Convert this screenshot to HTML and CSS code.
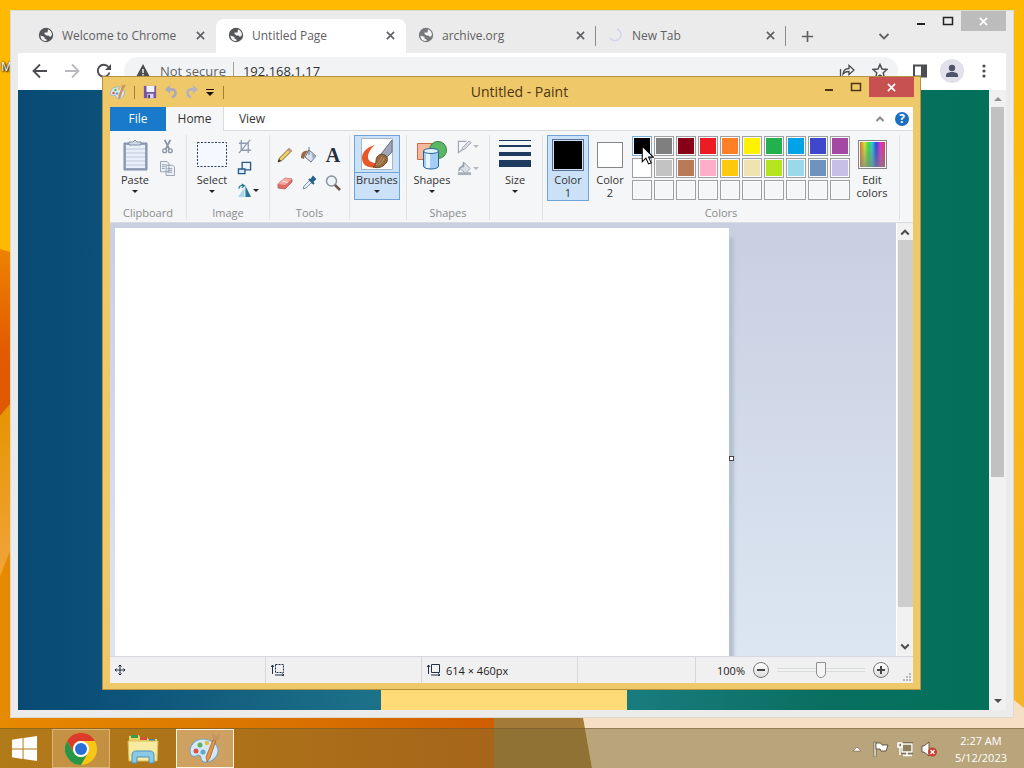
FILE: index.html
```
<!DOCTYPE html>
<html lang="en">
<head>
    <meta charset="UTF-8">
    <meta name="viewport" content="width=device-width, initial-scale=1.0">
    <title>Desktop</title>
    <link rel="stylesheet" href="styles.css">
</head>
<body>
    <!-- shared icons -->
    <svg class="defs" aria-hidden="true">
        <symbol id="globe" viewBox="0 0 16 16">
            <circle cx="8" cy="8" r="7.200" fill="currentColor"/>
            <path d="M2.500 8.500l4 1.500v1.500l2 1v1.500C5 14.300 2.500 12 2.500 8.500zM10 2.300c2.500 1 4 3.200 4 5.700l-2 2-1.500-1.500H8.500L6.500 7V5.500h3z" fill="#f4f4f4"/>
        </symbol>
        <symbol id="cross" viewBox="0 0 10 10">
            <path d="M1 1l8 8M9 1L1 9" fill="none" stroke="currentColor" stroke-width="1.800"/>
        </symbol>
        <symbol id="minimize" viewBox="0 0 12 12">
            <path d="M2 9h8" stroke="currentColor" stroke-width="2"/>
        </symbol>
        <symbol id="maximize" viewBox="0 0 12 12">
            <path d="M1.500 2.500h9v7h-9zM1 2.500h10" fill="none" stroke="currentColor" stroke-width="1.500"/>
        </symbol>
        <symbol id="palette" viewBox="0 0 32 32">
            <path d="M14 6C6 6 1 12 1 18c0 5 3 6 6 5 3-2 5 0 5 2 0 3 3 5 7 4 6-1 11-7 10-13S21 6 14 6z" fill="#d6e8f5" stroke="#7ba3bf" stroke-width="1.200"/>
            <circle cx="7" cy="18" r="2.500" fill="#d65547"/>
            <circle cx="11" cy="12" r="2.500" fill="#5fb05a"/>
            <circle cx="18" cy="10" r="2.300" fill="#e3c044"/>
            <circle cx="14" cy="19" r="2.600" fill="#5fa9cf"/>
            <path d="M27 7l-6 18-3 4-1-5 7-17z" fill="#e79648" stroke="#a66229" stroke-width=".8"/>
            <path d="M24 6l-1-5 4 2 4-3-1 6-3 2z" fill="#c59562"/>
        </symbol>
    </svg>

    <div class="desktop">
        <svg class="wallpaper" viewBox="0 0 1024 768" preserveAspectRatio="none" aria-hidden="true">
            <defs>
                <linearGradient id="flame" x1="0" y1="0" x2="0" y2="1">
                    <stop offset="0" stop-color="#ee8200"/>
                    <stop offset=".6" stop-color="#e35b00"/>
                    <stop offset="1" stop-color="#e05800"/>
                </linearGradient>
                <linearGradient id="gold" x1="0" y1="0" x2="0" y2="1">
                    <stop offset="0" stop-color="#e69400"/>
                    <stop offset="1" stop-color="#f0a43a"/>
                </linearGradient>
                <linearGradient id="floor" x1="0" y1="0" x2="1" y2="0">
                    <stop offset="0" stop-color="#e68a00"/>
                    <stop offset=".45" stop-color="#dc7800"/>
                    <stop offset="1" stop-color="#cf5e00"/>
                </linearGradient>
                <linearGradient id="side" x1="0" y1="0" x2="0" y2="1">
                    <stop offset="0" stop-color="#ffba00"/>
                    <stop offset="1" stop-color="#f6b42e"/>
                </linearGradient>
            </defs>
            <path d="M0 0h1024v768H0z" fill="#ffb900"/>
            <path d="M0 249l10 3v158L0 416z" fill="url(#flame)"/>
            <path d="M0 416l10-12v150L0 576z" fill="url(#gold)"/>
            <path d="M0 576l10-25v150h486v67H0z" fill="url(#floor)"/>
            <path d="M494 700h86l12 68H494z" fill="#a37b37"/>
            <path d="M1000 0h24v720h-24z" fill="url(#side)"/>
            <path d="M580 700h434l10 8v60H592z" fill="#f5dfc5"/>
        </svg>

        <main class="workspace">
            <a class="shortcut" href="#">M</a>

            <!-- browser window -->
            <section class="chrome-window" aria-label="Chrome">
                <header class="tab-strip">
                    <div class="tab">
                        <svg class="tab-icon"><use href="#globe"/></svg>
                        <span class="tab-title">Welcome to Chrome</span>
                        <button class="tab-close" aria-label="Close tab"><svg><use href="#cross"/></svg></button>
                    </div>
                    <div class="tab active">
                        <svg class="tab-icon"><use href="#globe"/></svg>
                        <span class="tab-title">Untitled Page</span>
                        <button class="tab-close" aria-label="Close tab"><svg><use href="#cross"/></svg></button>
                    </div>
                    <div class="tab divided">
                        <svg class="tab-icon light"><use href="#globe"/></svg>
                        <span class="tab-title">archive.org</span>
                        <button class="tab-close" aria-label="Close tab"><svg><use href="#cross"/></svg></button>
                    </div>
                    <div class="tab divided">
                        <svg class="tab-icon" viewBox="0 0 16 16"><path d="M9 2a6 6 0 1 1-7 9" fill="none" stroke="#d0d5ef" stroke-width="1.500"/></svg>
                        <span class="tab-title">New Tab</span>
                        <button class="tab-close" aria-label="Close tab"><svg><use href="#cross"/></svg></button>
                    </div>
                    <button class="new-tab" aria-label="New tab"><svg viewBox="0 0 14 14"><path d="M7 1v12M1 7h12" stroke="currentColor" stroke-width="1.800"/></svg></button>
                    <span class="spacer"></span>
                    <button class="tab-search" aria-label="Search tabs"><svg viewBox="0 0 12 12"><path d="M1.500 4L6 8.500 10.500 4" fill="none" stroke="currentColor" stroke-width="1.800"/></svg></button>
                    <div class="window-controls">
                        <button class="control" aria-label="Minimize"><svg><use href="#minimize"/></svg></button>
                        <button class="control" aria-label="Maximize"><svg><use href="#maximize"/></svg></button>
                        <button class="control close" aria-label="Close"><svg class="x"><use href="#cross"/></svg></button>
                    </div>
                </header>

                <nav class="toolbar">
                    <button class="tool" aria-label="Back"><svg viewBox="0 0 16 16"><path d="M15 8H2M8 1.500L1.500 8 8 14.500" fill="none" stroke="#4c4d50" stroke-width="1.800"/></svg></button>
                    <button class="tool" aria-label="Forward"><svg viewBox="0 0 16 16"><path d="M1 8h13M8 1.500L14.500 8 8 14.500" fill="none" stroke="#b9babd" stroke-width="1.800"/></svg></button>
                    <button class="tool" aria-label="Reload"><svg viewBox="0 0 16 16"><path d="M13.500 9.500A6 6 0 1 1 12.500 4" fill="none" stroke="#4c4d50" stroke-width="1.900"/><path d="M15 1v6H9z" fill="#4c4d50"/></svg></button>
                    <div class="omnibox">
                        <svg class="warning" viewBox="0 0 16 16"><path d="M8 1L15 14H1z" fill="#4c4d50"/><path d="M8 6v4M8 11v1.500" stroke="#f1f3f4" stroke-width="1.500"/></svg>
                        <label for="address">Not secure</label>
                        <input id="address" type="text" value="192.168.1.17">
                        <button class="tool" aria-label="Share"><svg viewBox="0 0 16 16"><path d="M1.500 6v8.500H12M4 11c.5-4 3-5.500 6-5.500V2.500L15 7l-5 4.500V8.500C7 8.500 5.500 9 4 11z" fill="none" stroke="#4c4d50" stroke-width="1.300"/></svg></button>
                        <button class="tool" aria-label="Bookmark"><svg viewBox="0 0 16 16"><path d="M8 1.500l2 4.500 5 .500-3.700 3.300 1 5L8 12.200 3.700 14.800l1-5L1 6.500 6 6z" fill="none" stroke="#4c4d50" stroke-width="1.500"/></svg></button>
                    </div>
                    <button class="tool" aria-label="Side panel"><svg viewBox="0 0 16 16"><path d="M2 2.500h12v11H2z" fill="none" stroke="#4c4d50" stroke-width="2"/><path d="M9 2h5v12H9z" fill="#4c4d50"/></svg></button>
                    <button class="tool avatar" aria-label="Profile"><svg viewBox="0 0 16 16"><circle cx="8" cy="5" r="3.200" fill="#4f5468"/><path d="M2 14v-2c0-4 12-4 12 0v2z" fill="#4f5468"/></svg></button>
                    <button class="tool" aria-label="Menu"><svg viewBox="0 0 16 16" fill="#4c4d50"><circle cx="8" cy="3" r="1.600"/><circle cx="8" cy="8" r="1.600"/><circle cx="8" cy="13" r="1.600"/></svg></button>
                </nav>

                <div class="viewport">
                    <div class="page"><div class="panel"></div></div>
                    <div class="page-scroll">
                        <svg viewBox="0 0 8 4"><path d="M4 0l4 4H0z" fill="#929292"/></svg>
                        <div class="page-thumb"></div>
                        <svg viewBox="0 0 8 4"><path d="M0 0h8L4 4z" fill="#4d4d4d"/></svg>
                    </div>
                </div>
            </section>

            <!-- paint window -->
            <section class="paint-window" aria-label="Paint">
                <header class="title-bar">
                    <div class="quick-access">
                        <svg class="icon"><use href="#palette"/></svg>
                        <i class="bar"></i>
                        <button class="quick" aria-label="Save"><svg viewBox="0 0 16 16"><path d="M1 1h14v14H1z" fill="#7557a5"/><path d="M4 1h9v7H4z" fill="#f5f3fa"/><path d="M5 10h7v5H5z" fill="#ddd4eb"/><path d="M6 11h2v4H6z" fill="#4c3474"/></svg></button>
                        <button class="quick" aria-label="Undo"><svg viewBox="0 0 16 16"><path d="M5 5h4c6 0 5 8 0 9" fill="none" stroke="#aaa9bd" stroke-width="3"/><path d="M7 0v10L1 5z" fill="#aaa9bd"/></svg></button>
                        <button class="quick" aria-label="Redo"><svg viewBox="0 0 16 16"><path d="M11 5H7c-6 0-5 8 0 9" fill="none" stroke="#b5b2bd" stroke-width="3"/><path d="M9 0v10l6-5z" fill="#b5b2bd"/></svg></button>
                        <button class="quick narrow" aria-label="Customize toolbar"><svg viewBox="0 0 8 8"><path d="M0 1h8v1H0zM0 4h8L4 8z" fill="#1d1400"/></svg></button>
                        <i class="bar"></i>
                    </div>
                    <h1>Untitled - Paint</h1>
                    <div class="window-controls">
                        <button class="control" aria-label="Minimize"><svg><use href="#minimize"/></svg></button>
                        <button class="control" aria-label="Maximize"><svg><use href="#maximize"/></svg></button>
                        <button class="control close" aria-label="Close"><svg class="x"><use href="#cross"/></svg></button>
                    </div>
                </header>

                <nav class="ribbon-tabs">
                    <button class="ribbon-tab file">File</button>
                    <button class="ribbon-tab home">Home</button>
                    <button class="ribbon-tab">View</button>
                    <span class="spacer"></span>
                    <button class="collapse" aria-label="Collapse ribbon"><svg viewBox="0 0 10 10"><path d="M1.500 7L5 3.500 8.500 7" fill="none" stroke="#8b8b8b" stroke-width="2"/></svg></button>
                    <button class="help" aria-label="Help">?</button>
                </nav>

                <div class="ribbon">
                    <div class="group">
                        <div class="group-body">
                            <button class="big">
                                <span class="picture"><svg class="p32" viewBox="0 0 32 32"><path d="M5 4h23v27H5z" fill="#94a3ba" stroke="#7f8da6"/><path d="M7 6h19v23H7z" fill="#e9eff8"/><path d="M7 10h19M7 14h19M7 18h19M7 22h19M7 26h19" stroke="#bccadd"/><path d="M10 6V3h4l2-2 2 2h4v3z" fill="#d5dbe5" stroke="#7f8da6"/></svg></span>
                                <span>Paste</span><i class="arrow"></i>
                            </button>
                            <div class="stack">
                                <button class="small" aria-label="Cut"><svg viewBox="0 0 16 16"><path d="M5 1l5 10M11 1L6 11" stroke="#8c96a8" stroke-width="2"/><circle cx="5" cy="12.500" r="2" fill="none" stroke="#8c96a8" stroke-width="1.500"/><circle cx="11" cy="12.500" r="2" fill="none" stroke="#8c96a8" stroke-width="1.500"/></svg></button>
                                <button class="small" aria-label="Copy"><svg viewBox="0 0 16 16"><g fill="#edf0f5" stroke="#929fb4"><path d="M.5.5h7l2 2v9h-9zM6.500 4.500h7l2 2v9h-9z"/><path d="M2 4h4M2 6h3M2 8h3M8 8h5M8 10h5M8 12h5"/></g></svg></button>
                            </div>
                        </div>
                        <span class="group-name">Clipboard</span>
                    </div>

                    <div class="group">
                        <div class="group-body">
                            <button class="big">
                                <span class="picture"><svg class="p32" viewBox="0 0 32 32"><path d="M1.500 3.500h29v24h-29z" fill="#f5f9ff" stroke="#233a63" stroke-dasharray="2 1.500"/></svg></span>
                                <span>Select</span><i class="arrow"></i>
                            </button>
                            <div class="stack">
                                <button class="small" aria-label="Crop"><svg viewBox="0 0 16 16"><path d="M4.500 1v11H15M2 4.500h10V15M2 15L14 1" fill="none" stroke="#909cb0" stroke-width="1.400"/></svg></button>
                                <button class="small" aria-label="Resize"><svg viewBox="0 0 16 16"><path d="M5.500 1.500h9v8h-9z" fill="#edf5fc" stroke="#285788" stroke-width="1.400"/><path d="M1.500 8.500h7v5h-7z" fill="#d8e9f9" stroke="#285788" stroke-width="1.400"/></svg></button>
                                <button class="small" aria-label="Rotate"><svg viewBox="0 0 16 16"><path d="M8 5v10H1z" fill="#acd4ea"/><path d="M9 3l6 12H9z" fill="#287695"/><path d="M2 6c0-3 3-4 5-3M5 1l3 2-3 2" fill="none" stroke="#287695" stroke-width="1.300"/></svg><i class="arrow"></i></button>
                            </div>
                        </div>
                        <span class="group-name">Image</span>
                    </div>

                    <div class="group">
                        <div class="group-body tools">
                            <button aria-label="Pencil"><svg viewBox="0 0 16 16"><path d="M1 15l1.500-4L12 1.500l2.500 2.500L5 13.500z" fill="#f0cf62" stroke="#6e5c3a" stroke-width=".9"/><path d="M11.500 2l2.500 2.500" stroke="#c98f86" stroke-width="2.500"/><path d="M1 15l1-3 2 2z" fill="#333"/></svg></button>
                            <button aria-label="Fill"><svg viewBox="0 0 16 16"><path d="M8 3l7 6-5 6-6-5z" fill="#d9e2ec" stroke="#66788b"/><path d="M10 4l5 5-3 4z" fill="#9dafbf"/><path d="M8 0v8" stroke="#66788b"/><path d="M0 11C0 5 3 3 8 4 5 5 4 8 3 12z" fill="#9b674a"/></svg></button>
                            <button class="text-tool" aria-label="Text">A</button>
                            <button aria-label="Eraser"><svg viewBox="0 0 16 16"><path d="M1 9l7-6 7 1v3l-7 7-7-1z" fill="#e36c68" stroke="#b85455" stroke-width=".8"/><path d="M8 3l7 1-7 6-7-1z" fill="#f6a79e"/><path d="M5 6l6 1.500" stroke="#fff0e9"/></svg></button>
                            <button aria-label="Color picker"><svg viewBox="0 0 16 16"><path d="M2 14l1-3 6-6 2 2-6 6z" fill="#e9f2fa" stroke="#7892ac"/><path d="M8 4l5 5M10 5l2-3 2 2-3 3z" fill="#28618f" stroke="#28618f" stroke-width="2"/></svg></button>
                            <button aria-label="Magnifier"><svg viewBox="0 0 16 16"><circle cx="6.500" cy="6" r="5" fill="#edf5fa" stroke="#8992a0" stroke-width="1.500"/><path d="M10 10l5 5" stroke="#6d5850" stroke-width="2.500"/></svg></button>
                        </div>
                        <span class="group-name">Tools</span>
                    </div>

                    <div class="group">
                        <div class="group-body">
                            <button class="big brushes selected">
                                <span class="picture"><svg class="p32" viewBox="0 0 32 32"><path d="M.500.500h31v31H.5z" fill="#fff" stroke="#a8b7c5"/><path d="M14 7C6 9 1 14 1 20c0 7 6 11 15 9l3-4c-6 1-12-1-12-6 0-4 3-9 7-12z" fill="#e7572a"/><path d="M20 16L31 2v12l-7 7z" fill="#a0a6b5" stroke="#6c7282"/><path d="M12 29c4-2 2-6 4-10 2-3 6-4 9-1s1 7-2 9c-3 3-7 3-11 2z" fill="#986b3e" stroke="#6d472a"/><path d="M15 27c3-2 4-5 6-8M18 27c3-2 4-4 5-7" fill="none" stroke="#c39a68"/></svg></span>
                                <span>Brushes</span><i class="arrow"></i>
                            </button>
                        </div>
                    </div>

                    <div class="group">
                        <div class="group-body">
                            <button class="big">
                                <span class="picture"><svg class="p32" viewBox="0 0 32 32"><path d="M1.500 4.500h17v16h-17z" fill="#f6b89d" stroke="#cd6949"/><circle cx="22" cy="11" r="8.500" fill="#5cb765" stroke="#2b833b"/><path d="M7.500 12v15c0 4 15 4 15 0V12z" fill="#a4cff5" stroke="#28659a"/><path d="M12 14v15" stroke="#e8f5ff" stroke-width="4"/><ellipse cx="15" cy="12" rx="7.500" ry="2.500" fill="#e2f2fd" stroke="#28659a"/></svg></span>
                                <span>Shapes</span><i class="arrow"></i>
                            </button>
                            <div class="stack disabled">
                                <button class="small" aria-label="Shape outline"><svg viewBox="0 0 16 16"><path d="M10 2.500H1.500v12L5 12" fill="none" stroke="#9aa3b0" stroke-width="1.200"/><path d="M5 12l1-3 7-7 2 2-7 7z" fill="#d8dce2" stroke="#9aa3b0"/></svg><i class="arrow"></i></button>
                                <button class="small" aria-label="Shape fill"><svg viewBox="0 0 16 16"><path d="M8 2l6 6-5 5-6-5z" fill="#dbe0e6" stroke="#929dac"/><path d="M1 12h14v3H1z" fill="#a7afbb"/><path d="M2 11c0-4 2-5 5-5M7 1v5" fill="none" stroke="#929dac" stroke-width="1.500"/></svg><i class="arrow"></i></button>
                            </div>
                        </div>
                        <span class="group-name">Shapes</span>
                    </div>

                    <div class="group">
                        <div class="group-body">
                            <button class="big">
                                <span class="picture"><svg class="p32" viewBox="0 0 32 32"><path d="M0 1h32v1H0zM0 6h32v2H0zM0 13h32v4H0zM0 21h32v7H0z" fill="#1e3a5f"/></svg></span>
                                <span>Size</span><i class="arrow"></i>
                            </button>
                        </div>
                    </div>

                    <div class="group">
                        <div class="group-body colors">
                            <button class="big selected">
                                <span class="picture"><i class="sample foreground"></i></span>
                                <span>Color<br>1</span>
                            </button>
                            <button class="big">
                                <span class="picture"><i class="sample background"></i></span>
                                <span>Color<br>2</span>
                            </button>
                            <div class="swatches">
                                <button class="swatch black" aria-label="Black"></button>
                                <button class="swatch gray" aria-label="Gray"></button>
                                <button class="swatch dark-red" aria-label="Dark red"></button>
                                <button class="swatch red" aria-label="Red"></button>
                                <button class="swatch orange" aria-label="Orange"></button>
                                <button class="swatch yellow" aria-label="Yellow"></button>
                                <button class="swatch green" aria-label="Green"></button>
                                <button class="swatch turquoise" aria-label="Turquoise"></button>
                                <button class="swatch indigo" aria-label="Indigo"></button>
                                <button class="swatch purple" aria-label="Purple"></button>
                                <button class="swatch white" aria-label="White"></button>
                                <button class="swatch light-gray" aria-label="Light gray"></button>
                                <button class="swatch brown" aria-label="Brown"></button>
                                <button class="swatch rose" aria-label="Rose"></button>
                                <button class="swatch gold" aria-label="Gold"></button>
                                <button class="swatch light-yellow" aria-label="Light yellow"></button>
                                <button class="swatch lime" aria-label="Lime"></button>
                                <button class="swatch light-turquoise" aria-label="Light turquoise"></button>
                                <button class="swatch blue-gray" aria-label="Blue gray"></button>
                                <button class="swatch lavender" aria-label="Lavender"></button>
                                <button class="swatch" aria-label="Custom 1"></button>
                                <button class="swatch" aria-label="Custom 2"></button>
                                <button class="swatch" aria-label="Custom 3"></button>
                                <button class="swatch" aria-label="Custom 4"></button>
                                <button class="swatch" aria-label="Custom 5"></button>
                                <button class="swatch" aria-label="Custom 6"></button>
                                <button class="swatch" aria-label="Custom 7"></button>
                                <button class="swatch" aria-label="Custom 8"></button>
                                <button class="swatch" aria-label="Custom 9"></button>
                                <button class="swatch" aria-label="Custom 10"></button>
                            </div>
                            <button class="big">
                                <span class="picture"><i class="sample spectrum"></i></span>
                                <span>Edit<br>colors</span>
                            </button>
                        </div>
                        <span class="group-name">Colors</span>
                    </div>
                </div>

                <div class="work-area">
                    <div class="canvas-area">
                        <div class="canvas"><i class="handle"></i></div>
                    </div>
                    <div class="paint-scroll">
                        <svg viewBox="0 0 8 8"><path d="M1 6l3-3 3 3" fill="none" stroke="#4d4d4d" stroke-width="1.600"/></svg>
                        <div class="paint-thumb"></div>
                        <svg viewBox="0 0 8 8"><path d="M1 2l3 3 3-3" fill="none" stroke="#4d4d4d" stroke-width="1.600"/></svg>
                    </div>
                </div>

                <footer class="status-bar">
                    <div class="status"><svg viewBox="0 0 12 12"><path d="M6 1v10M1 6h10M4.500 2.500L6 1l1.500 1.500M4.500 9.500L6 11l1.500-1.500M2.500 4.500L1 6l1.500 1.500M9.500 4.500L11 6 9.500 7.500" fill="none" stroke="#1c2b3c"/></svg></div>
                    <div class="status"><svg class="wide" viewBox="0 0 14 12"><path d="M1.500 10V1M0 3l1.500-2L3 3M4 11h9M11 9.500l2 1.500-2 1" fill="none" stroke="#1e3349"/><path d="M4.500.5h8v8h-8z" fill="none" stroke="#1e3349" stroke-dasharray="2 1"/></svg></div>
                    <div class="status"><svg class="wide" viewBox="0 0 14 12"><path d="M1.500 10V1M0 3l1.500-2L3 3M4 11h9M11 9.500l2 1.500-2 1M4.500.5h8v8h-8z" fill="none" stroke="#1e3349"/></svg><span>614 × 460px</span></div>
                    <div class="status blank"></div>
                    <div class="zoom">
                        <label for="zoom">100%</label>
                        <button class="round" aria-label="Zoom out"><svg viewBox="0 0 10 10"><path d="M1 5h8" stroke="#444" stroke-width="2"/></svg></button>
                        <input id="zoom" type="range" min="0" max="100" value="50">
                        <button class="round" aria-label="Zoom in"><svg viewBox="0 0 10 10"><path d="M1 5h8M5 1v8" stroke="#444" stroke-width="2"/></svg></button>
                        <svg class="grip" viewBox="0 0 8 8"><path d="M6 0h2v2H6zM3 3h2v2H3zM6 3h2v2H6zM0 6h2v2H0zM3 6h2v2H3zM6 6h2v2H6z" fill="#b7b7b7"/></svg>
                    </div>
                </footer>
            </section>

            <svg class="pointer" viewBox="0 0 12 19" aria-hidden="true"><path d="M1 1v15l3.500-3.500L7 18l2.500-1-2.500-5.500h4.500z" fill="#fff" stroke="#000"/></svg>
        </main>

        <footer class="taskbar">
            <button class="start" aria-label="Start"><svg viewBox="0 0 28 28"><path d="M1 5l11-2v11H1zM13 3l14-2v13H13zM1 15h11v10L1 23zM13 15h14v12l-14-2z" fill="#fff"/></svg></button>
            <button class="task open" aria-label="Chrome">
                <svg viewBox="0 0 32 32"><circle cx="16" cy="16" r="16" fill="#f9c713"/><path d="M2.100 8A16 16 0 0 1 29.900 8H16a8 8 0 0 0-7 12z" fill="#dc3b2b"/><path d="M2.100 8A16 16 0 0 0 16 32l7-12a8 8 0 0 1-14 0z" fill="#279648"/><circle cx="16" cy="16" r="8" fill="#fff"/><circle cx="16" cy="16" r="6" fill="#2870d8"/></svg>
            </button>
            <button class="task" aria-label="File Explorer">
                <svg viewBox="0 0 32 32"><path d="M2 3l10-1 1 2h7l1 2h9v22H2z" fill="#e9d56a"/><path d="M4 2h7v3H4z" fill="#3d9b4a"/><path d="M13 4h7v3h-7z" fill="#ce5138"/><path d="M22 6h6v3h-6z" fill="#3f82a6"/><path d="M1 8h30l-1 20H2z" fill="#f6eba0" stroke="#d7be56"/><path d="M5 30V22c0-3 2-4 4-4h14c2 0 4 1 4 4v8h-5v-6H10v6z" fill="#8ac8e6" stroke="#4d93be"/></svg>
            </button>
            <button class="task open current" aria-label="Paint"><svg><use href="#palette"/></svg></button>
            <span class="spacer"></span>
            <div class="tray">
                <button aria-label="Show hidden icons"><svg viewBox="0 0 16 16"><path d="M4 10l4-4 4 4z" fill="#fff" stroke="#5c4c30" stroke-width=".5"/></svg></button>
                <button aria-label="Action center"><svg viewBox="0 0 16 16"><path d="M1 1h2v15H1z" fill="#fff" stroke="#4a3c24" stroke-width=".6"/><path d="M3 2h5l1 2h6l-2 6H8L7 8H3z" fill="#fff" stroke="#4a3c24" stroke-width=".8"/></svg></button>
                <button aria-label="Network"><svg viewBox="0 0 16 16"><path d="M5 3h10v8H5z" fill="#8f805b" stroke="#4a3c24" stroke-width="3"/><path d="M5 3h10v8H5z" fill="#8f805b" stroke="#fff" stroke-width="1.500"/><path d="M10 11v3M6 14.500h9M3 6v8M1 2h4v4H1z" fill="none" stroke="#fff" stroke-width="1.500"/></svg></button>
                <button aria-label="Volume muted"><svg viewBox="0 0 16 16"><path d="M1 5h2l5-4v14l-5-4H1z" fill="#fff" stroke="#4a3c24" stroke-width=".8"/><circle cx="11.500" cy="11" r="4.500" fill="#c83b2f"/><path d="M9.500 9l4 4M13.500 9l-4 4" stroke="#fff" stroke-width="1.300"/></svg></button>
                <time class="clock" datetime="2023-05-12T02:27">2:27 AM<br>5/12/2023</time>
            </div>
        </footer>
    </div>
</body>
</html>
```
FILE: styles.css
```
* {
    box-sizing: border-box;
}
body {
    margin: 0;
    font-family: "Open Sans", "Noto Sans", sans-serif;
    font-size: 12px;
    color: #333;
}
button {
    display: flex;
    align-items: center;
    justify-content: center;
    margin: 0;
    padding: 0;
    border: none;
    background: none;
    font: inherit;
    color: inherit;
}
svg {
    display: block;
    flex: none;
    width: 16px;
    height: 16px;
}
.defs {
    position: absolute;
    width: 0;
    height: 0;
}
.spacer {
    flex: 1;
}

/* desktop */
.desktop {
    position: relative;
    display: flex;
    flex-direction: column;
    height: 100vh;
    overflow: hidden;
}
.wallpaper {
    position: absolute;
    width: 100%;
    height: 100%;
}
.workspace {
    position: relative;
    flex: 1;
}
.shortcut {
    position: absolute;
    left: 1px;
    top: 58px;
    color: #fff;
    text-decoration: none;
    text-shadow: 1px 1px 2px #000, 0 0 2px #000;
}
.window-controls {
    display: flex;
    align-self: flex-start;
}
.control {
    width: 27px;
    height: 20px;
}
.control svg {
    width: 12px;
    height: 12px;
}
.control.close {
    width: 45px;
    color: #fff;
}
.control .x {
    width: 9px;
    height: 9px;
}

/* browser */
.chrome-window {
    position: absolute;
    inset: 10px 10px 10px 10px;
    display: flex;
    flex-direction: column;
    padding: 0 7px 7px;
    background: #ebebeb;
    border: 1px solid #dfd9cb;
}
.tab-strip {
    display: flex;
    align-items: center;
    height: 42px;
    padding-left: 8px;
    color: #5f6063;
}
.tab {
    display: flex;
    align-items: center;
    align-self: flex-end;
    gap: 8px;
    width: 190px;
    height: 34px;
    padding: 0 11px 2px 12px;
}
.tab.active {
    background: #fff;
    border-radius: 8px 8px 0 0;
}
.tab.divided {
    background: linear-gradient(#8b8b8b, #8b8b8b) right center / 1px 20px no-repeat;
}
.tab-icon {
    color: #55565a;
}
.tab-icon.light {
    color: #77787b;
}
.tab-title {
    flex: 1;
    white-space: nowrap;
}
.tab-close svg {
    width: 9px;
    height: 9px;
}
.new-tab {
    align-self: flex-end;
    width: 42px;
    height: 34px;
}
.new-tab svg {
    width: 13px;
    height: 13px;
}
.tab-search {
    align-self: flex-end;
    width: 42px;
    height: 34px;
    margin-right: 2px;
}
.tab-search svg {
    width: 12px;
    height: 12px;
}
.chrome-window .control {
    color: #222;
}
.chrome-window .close {
    background: #bcbcbc;
    color: #fff;
}
.toolbar {
    display: flex;
    align-items: center;
    gap: 8px;
    height: 37px;
    padding: 0 10px 2px;
    background: #fff;
}
.tool {
    width: 24px;
    height: 24px;
}
.omnibox {
    display: flex;
    flex: 1;
    align-items: center;
    gap: 9px;
    height: 28px;
    padding: 0 6px 0 11px;
    margin-right: 2px;
    border-radius: 14px;
    background: #f1f3f4;
    font-size: 13px;
}
.omnibox label {
    padding-right: 7px;
    border-right: 1px solid #a0a1a3;
    color: #626367;
    line-height: 18px;
}
.omnibox input {
    flex: 1;
    min-width: 0;
    padding: 0;
    border: none;
    background: none;
    font: inherit;
    color: #303134;
}
.avatar {
    border-radius: 12px;
    background: #e0e1ea;
}
.viewport {
    display: flex;
    flex: 1;
}
.page {
    display: flex;
    flex: 1;
    align-items: flex-end;
    justify-content: center;
    background: linear-gradient(90deg, #084a74 0%, #0b5078 8%, #1c7188 36%, #187b7d 64%, #0a7062 82%, #03705a 100%);
}
.panel {
    width: 246px;
    height: 120px;
    background: linear-gradient(#f5ce5e, #ffdc78);
}
.page-scroll {
    display: flex;
    flex-direction: column;
    align-items: center;
    width: 17px;
    padding: 7px 0;
    background: #f1f1f1;
}
.page-scroll svg {
    width: 8px;
    height: 4px;
}
.page-thumb {
    width: 13px;
    height: 61%;
    margin: 6px 0 auto;
    background: #c1c1c1;
}

/* paint */
.paint-window {
    position: absolute;
    inset: 76px 103px 38px 102px;
    display: flex;
    flex-direction: column;
    padding: 0 7px 6px;
    border: 1px solid #b3913f;
    background: #efc869;
}
.title-bar {
    display: flex;
    align-items: center;
    height: 30px;
    margin-right: -1px;
    color: #4e3514;
}
.title-bar h1 {
    flex: 1;
    margin: 0;
    padding-bottom: 2px;
    font-size: 14px;
    font-weight: 400;
    text-align: center;
}
.title-bar .close {
    background: #c75050;
}
.quick-access {
    display: flex;
    align-items: center;
    width: 114px;
}
.quick-access .icon {
    margin-right: 8px;
}
.bar {
    width: 1px;
    height: 13px;
    background: #a27d34;
}
.quick {
    width: 22px;
    height: 22px;
}
.quick svg {
    width: 14px;
    height: 14px;
}
.bar + .quick {
    margin-left: 5px;
}
.quick.narrow {
    width: 16px;
    margin-right: 6px;
}
.quick.narrow svg {
    width: 8px;
    height: 8px;
}
.ribbon-tabs {
    display: flex;
    align-items: center;
    height: 24px;
    border-bottom: 1px solid #dadbdc;
    background: #fff;
}
.ribbon-tab {
    width: 56px;
    height: 24px;
}
.ribbon-tab.file {
    background: #1979ca;
    color: #fff;
}
.ribbon-tab.home {
    width: 58px;
    border-right: 1px solid #dadbdc;
    background: #f5f6f7;
}
.collapse {
    margin-right: 10px;
}
.collapse svg {
    width: 10px;
    height: 10px;
}
.help {
    width: 14px;
    height: 14px;
    margin-right: 4px;
    border-radius: 7px;
    background: #1b6fc0;
    color: #fff;
    font-weight: 700;
}
.ribbon {
    display: grid;
    grid-template-columns: 77px 83px 80px 57px 83px 53px 357px;
    background: #f5f6f7;
    border-bottom: 1px solid #dadbdc;
    padding: 4px 0 2px;
    font-size: 11px;
    line-height: 13px;
}
.group {
    display: flex;
    flex-direction: column;
    border-right: 1px solid #e2e3e4;
}
.group-body {
    display: flex;
    align-items: flex-start;
    gap: 2px;
    height: 70px;
    padding: 0 4px;
}
.group-name {
    line-height: 15px;
    text-align: center;
    color: #8a8b8e;
}
.big {
    flex-direction: column;
    justify-content: flex-start;
    width: 42px;
    height: 66px;
    border: 1px solid transparent;
}
.big.selected {
    border-color: #6da3d8;
    background: #cbe1f8;
}
.big.brushes {
    width: 46px;
    height: 65px;
}
.brushes .picture {
    width: 44px;
    border-bottom: 1px solid #6da3d8;
}
.picture {
    display: flex;
    align-items: center;
    justify-content: center;
    height: 37px;
}
.p32 {
    width: 32px;
    height: 32px;
}
.arrow {
    border: 3px solid transparent;
    border-top-color: #222;
    border-bottom: none;
    margin-top: 4px;
}
.stack {
    display: flex;
    flex-direction: column;
}
.small {
    justify-content: flex-start;
    gap: 1px;
    height: 22px;
    padding: 0 2px;
}
.small svg {
    width: 15px;
    height: 15px;
}
.small .arrow {
    margin-top: 0;
}
.disabled .arrow {
    border-top-color: #b4b8be;
}
.tools {
    display: grid;
    grid-template-columns: repeat(3, 24px);
    grid-auto-rows: 28px;
    justify-content: start;
    gap: 0;
    padding: 6px 3px;
}
.tools button {
    height: 28px;
}
.tools .text-tool {
    font-family: "Liberation Serif", serif;
    font-size: 20px;
    font-weight: 700;
    color: #243042;
}
.colors {
    gap: 0;
}
.sample {
    width: 24px;
    height: 24px;
    border: 1px solid #868686;
}
.sample.foreground {
    width: 32px;
    height: 32px;
    border-color: #55718e;
    padding: 1px;
    background: #000 content-box;
}
.sample.background {
    width: 26px;
    height: 26px;
    background: #fff;
}
.sample.spectrum {
    width: 29px;
    height: 29px;
    padding: 1px;
    background: linear-gradient(rgba(128, 128, 128, 0), rgba(128, 128, 128, .7)) content-box, linear-gradient(90deg, #e5702a, #d4e735 18%, #35dc44 35%, #2acee0 48%, #3040dc 65%, #df30d0 82%, #e13a55) content-box;
}
.swatches {
    display: grid;
    grid-template-columns: repeat(10, 20px);
    gap: 2px;
    padding: 1px 1px 0;
}
.swatch {
    width: 20px;
    height: 20px;
    padding: 1px;
    border: 1px solid #a0a0a0;
    background-clip: content-box;
    box-shadow: inset 0 0 0 1px #fafbfc;
}
.black { background-color: #000; border-color: #7bb0dc; }
.gray { background-color: #7f7f7f; }
.dark-red { background-color: #880015; }
.red { background-color: #ed1c24; }
.orange { background-color: #ff7f27; }
.yellow { background-color: #fff200; }
.green { background-color: #22b14c; }
.turquoise { background-color: #00a2e8; }
.indigo { background-color: #3f48cc; }
.purple { background-color: #a349a4; }
.white { background-color: #fff; }
.light-gray { background-color: #c3c3c3; }
.brown { background-color: #b97a57; }
.rose { background-color: #ffaec9; }
.gold { background-color: #ffc90e; }
.light-yellow { background-color: #efe4b0; }
.lime { background-color: #b5e61d; }
.light-turquoise { background-color: #99d9ea; }
.blue-gray { background-color: #7092be; }
.lavender { background-color: #c8bfe7; }

.work-area {
    display: flex;
    flex: 1;
    min-height: 0;
}
.canvas-area {
    flex: 1;
    padding: 5px;
    overflow: hidden;
    background: linear-gradient(#c8cfe1, #dce6f2);
}
.canvas {
    position: relative;
    width: 614px;
    height: 460px;
    background: #fff;
    box-shadow: 6px 9px 3px -1px #b4c1cf;
}
.handle {
    position: absolute;
    left: 100%;
    top: 50%;
    width: 5px;
    height: 5px;
    margin-top: -2px;
    border: 1px solid #444;
    background: #fff;
}
.paint-scroll {
    display: flex;
    flex-direction: column;
    align-items: center;
    width: 17px;
    padding: 4px 0;
    border-left: 1px solid #fff;
    background: #f1f1f1;
}
.paint-scroll svg {
    width: 10px;
    height: 10px;
}
.paint-thumb {
    width: 15px;
    height: 367px;
    margin: 3px 0 auto;
    background: #cdcdcd;
}
.status-bar {
    display: flex;
    height: 27px;
    border-top: 1px solid #d5d8dc;
    background: #f0f0f0;
    color: #222;
    font-size: 11px;
}
.status {
    display: flex;
    align-items: center;
    gap: 5px;
    width: 156px;
    padding-left: 4px;
    border-right: 1px solid #d7d7d7;
}
.status svg {
    width: 12px;
    height: 12px;
}
.status .wide {
    width: 14px;
    margin-left: 1px;
}
.status.blank {
    flex: 1;
}
.zoom {
    display: flex;
    align-items: center;
    padding-left: 21px;
}
.round {
    width: 16px;
    height: 16px;
    margin: 0 8px;
    border: 1px solid #777;
    border-radius: 8px;
    background: linear-gradient(#fff, #ddd);
}
.round svg {
    width: 10px;
    height: 10px;
}
#zoom {
    appearance: none;
    width: 88px;
    height: 20px;
    margin: 0;
    background: linear-gradient(#d9dcdc, #d9dcdc) center / 100% 4px no-repeat, #f0f0f0;
    background: linear-gradient(#d9dcdc 1px, #f2f2f2 1px, #f2f2f2 3px, #d9dcdc 3px) center / 100% 4px no-repeat;
}
#zoom::-webkit-slider-thumb {
    appearance: none;
    width: 10px;
    height: 16px;
    border: 1px solid #8f8f8f;
    border-radius: 1px 1px 5px 5px;
    background: #f4f4f4;
}
.grip {
    align-self: flex-end;
    width: 8px;
    height: 8px;
    margin: 0 2px 2px 6px;
}
.pointer {
    position: absolute;
    left: 641px;
    top: 145px;
    width: 13px;
    height: 20px;
}

/* taskbar */
.taskbar {
    position: relative;
    display: flex;
    height: 40px;
    padding-right: 17px;
    border-top: 1px solid rgba(110, 85, 40, .5);
    background: rgba(125, 107, 50, .5);
    color: #fff;
}
.start {
    width: 48px;
}
.start svg {
    width: 27px;
    height: 27px;
}
.task {
    width: 58px;
    margin-left: 4px;
    border: 1px solid transparent;
}
.task svg {
    width: 32px;
    height: 32px;
}
.task.open {
    border-color: rgba(255, 235, 205, .4);
    background: rgba(255, 225, 190, .25);
}
.task.current {
    border-color: #fff5e1;
    background: rgba(255, 230, 205, .4);
}
.tray {
    display: flex;
    align-items: center;
    gap: 8px;
}
.clock {
    margin-left: 10px;
    font-size: 11px;
    line-height: 17px;
    text-align: center;
}
```
